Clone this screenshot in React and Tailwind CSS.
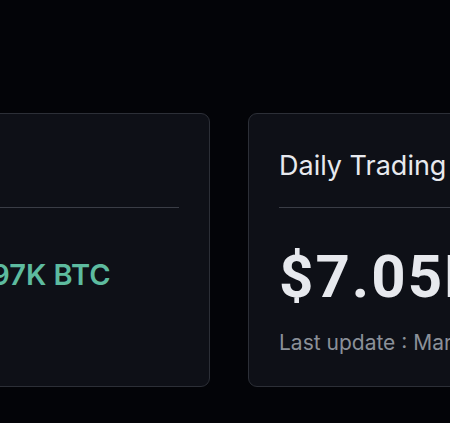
import React from 'react';

const Card = ({ title, value, valueClass, note }) => (
    <div className="w-[380px] h-[274px] shrink-0 rounded-[9px] border border-[#2c2f37] bg-[#0e1017] px-[30px] pt-[36px]">
        <h3 className="text-[27px] leading-[32px] text-[#e7e9ee] whitespace-nowrap">{title}</h3>
        <div className="mt-[25px] h-px bg-[#3a3d46]" />
        <div className={`whitespace-nowrap ${valueClass}`}>{value}</div>
        {note && (
            <p className="mt-[26px] text-[21px] leading-[24px] text-[#8b9099] whitespace-nowrap">{note}</p>
        )}
    </div>
);

const App = () => {
    return (
        <div className="w-[450px] h-[423px] overflow-hidden bg-[#030408] font-['Inter',sans-serif]">
            <div className="flex gap-[38px] pt-[113px] -ml-[170px]">
                <Card
                    title="Reserves"
                    value="≈ 21,248.97K BTC"
                    valueClass="mt-[49px] text-[29px] leading-[36px] font-semibold text-[#5dbb9f]"
                />
                <Card
                    title="Daily Trading Volume"
                    value="$7.05B"
                    valueClass="mt-[41px] text-[60px] leading-[56px] font-bold tracking-[2px] text-[#e7e9ee] font-['Roboto',sans-serif]"
                    note="Last update : Mar 28, 2024"
                />
            </div>
        </div>
    );
};

export default App;
